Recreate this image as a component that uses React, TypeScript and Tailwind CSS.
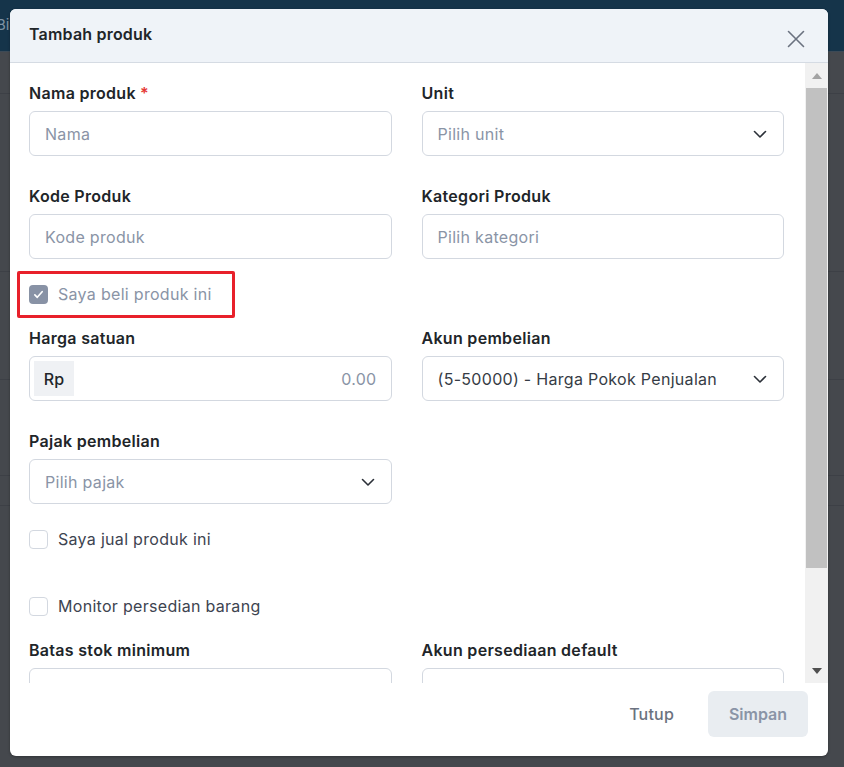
import React from "react";

const Chevron = () => (
  <svg width="16" height="16" viewBox="0 0 16 16" fill="none" className="shrink-0">
    <path d="M2.5 5.5L8 11L13.5 5.5" stroke="#2b3038" strokeWidth="1.6" strokeLinecap="round" strokeLinejoin="round" />
  </svg>
);

const Label = ({ children, req }: { children: React.ReactNode; req?: boolean }) => (
  <div className="h-[20px] leading-[20px] text-[16px] tracking-[0.3px] font-semibold text-[#212529] mb-[8px]">
    {children}
    {req && <span className="text-[#e53935] ml-[4px]">*</span>}
  </div>
);

const TextInput = ({ placeholder }: { placeholder: string }) => (
  <div className="h-[45px] w-full rounded-[6px] border border-[#d3d8e0] bg-white flex items-center px-[15px] text-[16px] tracking-[0.3px] text-[#8a94a6]">
    {placeholder}
  </div>
);

const Select = ({ value, placeholder }: { value?: string; placeholder?: string }) => (
  <div className="h-[45px] w-full rounded-[6px] border border-[#d3d8e0] bg-white flex items-center justify-between pl-[15px] pr-[15px] text-[16px] tracking-[0.3px]">
    <span className={value ? "text-[#363c45]" : "text-[#8a94a6]"}>{value ?? placeholder}</span>
    <Chevron />
  </div>
);

const Box = ({ checked }: { checked?: boolean }) =>
  checked ? (
    <div className="w-[19px] h-[19px] rounded-[4px] bg-[#8892a5] flex items-center justify-center">
      <svg width="13" height="13" viewBox="0 0 16 16" fill="none">
        <path d="M3.5 8.5L6.5 11.5L12.5 4.5" stroke="white" strokeWidth="2" strokeLinecap="round" strokeLinejoin="round" />
      </svg>
    </div>
  ) : (
    <div className="w-[19px] h-[19px] rounded-[4px] border border-[#d3d8e0] bg-white" />
  );

export default function App() {
  return (
    <div
      className="relative w-[844px] h-[767px] overflow-hidden bg-[#45484d]"
      style={{ fontFamily: "Inter, 'Noto Sans', sans-serif" }}
    >
      {/* background page */}
      <div className="h-[52px] bg-[#15344a] border-b border-[#3c4a57] flex items-center">
        <span className="text-[#7f93a5] text-[15px] ml-[-4px]">Bi</span>
      </div>
      <div className="h-[42px] border-b border-[#3d4046]" />
      <div className="h-[178px] border-b border-[#3d4046]" />
      <div className="h-[108px] border-b border-[#3d4046]" />
      <div className="h-[96px] border-b border-[#3d4046]" />
      <div className="h-[30px] border-b border-[#3d4046]" />

      {/* modal */}
      <div className="absolute left-[10px] top-[9px] w-[818px] h-[747px] rounded-[6px] bg-white flex flex-col overflow-hidden shadow-[0_1px_3px_rgba(0,0,0,0.3)]">
        {/* header */}
        <div className="h-[54px] shrink-0 bg-[#eff3f8] border-b border-[#d5dbe3] flex items-center justify-between pl-[19px] pr-[23px]">
          <div className="text-[16px] tracking-[0.2px] font-semibold text-[#212529] mt-[-4px]">Tambah produk</div>
          <svg width="18" height="18" viewBox="0 0 18 18" fill="none" className="mt-[6px]">
            <path d="M1.5 1.5L16.5 16.5M16.5 1.5L1.5 16.5" stroke="#6b7280" strokeWidth="1.6" strokeLinecap="round" />
          </svg>
        </div>

        {/* body */}
        <div className="flex flex-1 min-h-0">
          <div className="flex-1 overflow-hidden pl-[19px] pr-[21px] pt-[20px]">
            <div className="grid grid-cols-2 gap-x-[30px]">
              <div>
                <Label req>Nama produk</Label>
                <TextInput placeholder="Nama" />
              </div>
              <div>
                <Label>Unit</Label>
                <Select placeholder="Pilih unit" />
              </div>
            </div>
            <div className="grid grid-cols-2 gap-x-[30px] mt-[30px]">
              <div>
                <Label>Kode Produk</Label>
                <TextInput placeholder="Kode produk" />
              </div>
              <div>
                <Label>Kategori Produk</Label>
                <TextInput placeholder="Pilih kategori" />
              </div>
            </div>

            <div className="relative mt-[23px] h-[24px] flex items-center gap-[10px]">
              <Box checked />
              <span className="text-[16px] tracking-[0.3px] text-[#8a94a6]">Saya beli produk ini</span>
              <div className="absolute left-[-12px] top-[-11px] w-[218px] h-[47px] border-[3px] border-[#e8202a] rounded-[2px]" />
            </div>

            <div className="grid grid-cols-2 gap-x-[30px] mt-[22px]">
              <div>
                <Label>Harga satuan</Label>
                <div className="h-[45px] w-full rounded-[6px] border border-[#d3d8e0] bg-white flex items-center p-[4px] pr-[14px]">
                  <div className="h-full w-[40px] bg-[#eff1f4] flex items-center justify-center text-[16px] font-medium text-[#212529]">
                    Rp
                  </div>
                  <div className="flex-1 text-right text-[16px] tracking-[0.3px] text-[#8a94a6]">0.00</div>
                </div>
              </div>
              <div>
                <Label>Akun pembelian</Label>
                <Select value="(5-50000) - Harga Pokok Penjualan" />
              </div>
            </div>

            <div className="grid grid-cols-2 gap-x-[30px] mt-[30px]">
              <div>
                <Label>Pajak pembelian</Label>
                <Select placeholder="Pilih pajak" />
              </div>
            </div>

            <div className="mt-[23px] h-[24px] flex items-center gap-[10px]">
              <Box />
              <span className="text-[16px] tracking-[0.3px] text-[#3d4450]">Saya jual produk ini</span>
            </div>

            <div className="mt-[43px] h-[24px] flex items-center gap-[10px]">
              <Box />
              <span className="text-[16px] tracking-[0.3px] text-[#3d4450]">Monitor persedian barang</span>
            </div>

            <div className="grid grid-cols-2 gap-x-[30px] mt-[22px]">
              <div>
                <Label>Batas stok minimum</Label>
                <TextInput placeholder="" />
              </div>
              <div>
                <Label>Akun persediaan default</Label>
                <TextInput placeholder="" />
              </div>
            </div>
          </div>

          {/* scrollbar */}
          <div className="w-[23px] shrink-0 bg-[#f1f1f1] flex flex-col items-center">
            <div className="h-[25px] w-full flex items-center justify-center">
              <svg width="10" height="6" viewBox="0 0 10 6">
                <path d="M0 6L5 0L10 6Z" fill="#a3a3a3" />
              </svg>
            </div>
            <div className="h-[480px] w-[21px] bg-[#c1c1c1]" />
            <div className="flex-1" />
            <div className="h-[25px] w-full flex items-center justify-center">
              <svg width="10" height="6" viewBox="0 0 10 6">
                <path d="M0 0L10 0L5 6Z" fill="#505050" />
              </svg>
            </div>
          </div>
        </div>

        {/* footer */}
        <div className="h-[73px] shrink-0 flex items-start justify-end gap-[34px] pr-[20px] pt-[8px]">
          <span className="h-[46px] flex items-center text-[16px] tracking-[0.2px] font-medium text-[#6b7280]">Tutup</span>
          <div className="h-[46px] w-[100px] rounded-[6px] bg-[#e9edf1] flex items-center justify-center text-[16px] font-semibold text-[#8a94a6]">
            Simpan
          </div>
        </div>
      </div>
    </div>
  );
}
